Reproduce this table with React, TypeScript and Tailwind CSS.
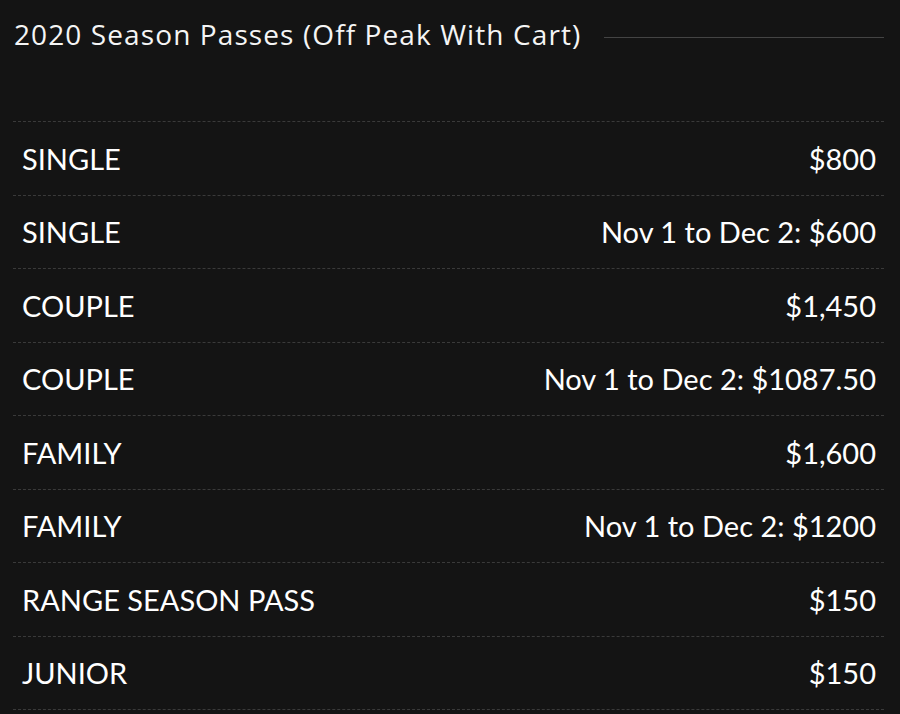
const rows: [string, string][] = [
  ["SINGLE", "$800"],
  ["SINGLE", "Nov 1 to Dec 2: $600"],
  ["COUPLE", "$1,450"],
  ["COUPLE", "Nov 1 to Dec 2: $1087.50"],
  ["FAMILY", "$1,600"],
  ["FAMILY", "Nov 1 to Dec 2: $1200"],
  ["RANGE SEASON PASS", "$150"],
  ["JUNIOR", "$150"],
]

export default function App() {
  return (
    <div className="min-h-screen w-[900px] h-[714px] overflow-hidden bg-[#141414] text-white pl-[13px] pr-[16px]">
      <div className="flex items-center pt-[16px] h-[52px]">
        <h2 className="pl-[1px] text-[28px] leading-[34px] tracking-[1.1px] font-['Open_Sans',sans-serif] text-[#f5f5f5] whitespace-nowrap">
          2020 Season Passes (Off Peak With Cart)
        </h2>
        <div className="flex-1 ml-[23px] mt-[6px] h-px bg-[#444]" />
      </div>
      <div className="mt-[69px]">
        {rows.map(([name, price], i) => (
          <div
            key={i}
            className="flex justify-between items-center h-[73.5px] border-t border-dashed border-[#3a3a3a] pl-[9px] pr-[8px] font-['Lato',sans-serif] text-[29px] text-white"
          >
            <span>{name}</span>
            <span>{price}</span>
          </div>
        ))}
        <div className="border-t border-dashed border-[#3a3a3a]" />
      </div>
    </div>
  )
}
